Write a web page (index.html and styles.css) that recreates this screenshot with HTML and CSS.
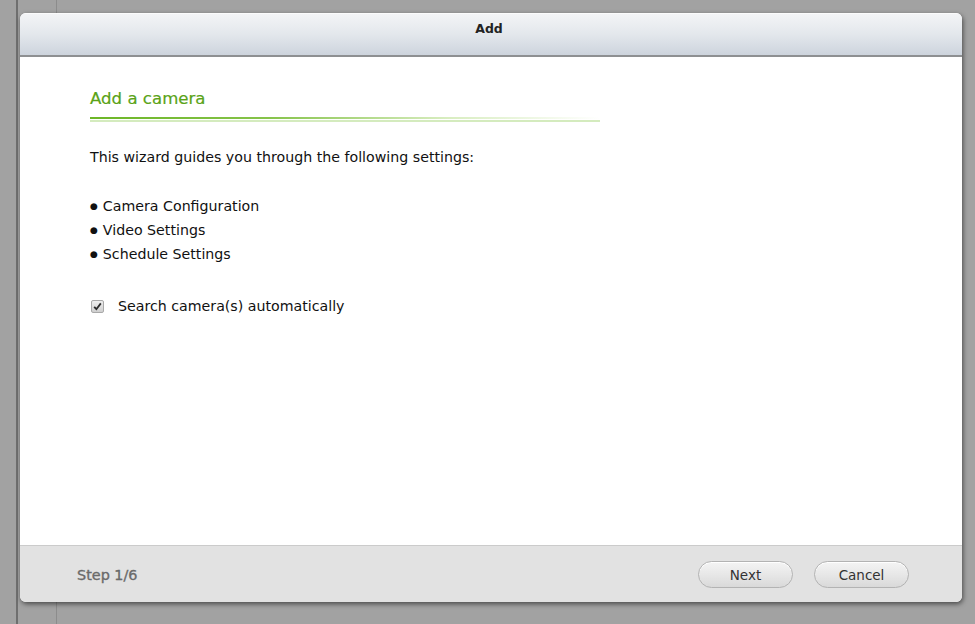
FILE: index.html
```html
<!DOCTYPE html>
<html>
<head>
<meta charset="utf-8">
<link rel="stylesheet" href="styles.css">
</head>
<body>
<div class="dialog">
  <div class="dlg-header">Add</div>
  <div class="dlg-body">
    <h1 class="title">Add a camera</h1>
    <div class="title-rule"></div>
    <p class="intro">This wizard guides you through the following settings:</p>
    <ul class="steps">
      <li>Camera Configuration</li>
      <li>Video Settings</li>
      <li>Schedule Settings</li>
    </ul>
    <label class="check-row">
      <span class="checkbox">
        <svg width="9" height="9" viewBox="0 0 9 9"><path d="M1.2 4.8 L3.4 7.2 L7.8 1.4" fill="none" stroke="#2a2a2a" stroke-width="1.8"/></svg>
      </span>
      <span>Search camera(s) automatically</span>
    </label>
  </div>
  <div class="dlg-footer">
    <span class="step">Step 1/6</span>
    <div class="buttons">
      <button class="btn">Next</button>
      <button class="btn">Cancel</button>
    </div>
  </div>
</div>
</body>
</html>
```
FILE: styles.css
```css
html, body {
  margin: 0;
  padding: 0;
  height: 100%;
}
body {
  background-color: #a2a2a2;
  background-image:
    linear-gradient(to right, transparent 16px, #6f6f6f 16px, #6f6f6f 18px, transparent 18px, transparent 56px, #8c8c8c 56px, #8c8c8c 57px, transparent 57px);
  font-family: "DejaVu Sans", Verdana, sans-serif;
  overflow: hidden;
  padding-top: 13px;
  box-sizing: border-box;
}
.dialog {
  margin-left: 20px;
  width: 942px;
  height: 589px;
  background: #fff;
  border-radius: 6px;
  box-shadow: 1px 2px 5px rgba(0,0,0,0.55);
  display: flex;
  flex-direction: column;
  overflow: hidden;
}
.dlg-header {
  height: 44px;
  flex: none;
  box-sizing: border-box;
  padding-top: 7px;
  background: linear-gradient(to bottom, #f3f4f6 0%, #e3e7ec 50%, #cdd4dd 100%);
  border-top: 1px solid #fbfbfb;
  border-bottom: 2px solid #8e9092;
  text-align: center;
  font-size: 12.5px;
  line-height: 16px;
  font-weight: bold;
  color: #222;
  padding-right: 4px;
}
.dlg-body {
  flex: 1;
  padding: 31px 0 0 70px;
  color: #111;
  font-size: 14.2px;
}
.title {
  margin: 0;
  font-size: 16.6px;
  font-weight: normal;
  color: #5aa317;
  line-height: 22px;
  -webkit-text-stroke: 0.2px #5aa317;
}
.title-rule {
  width: 510px;
  height: 2px;
  margin-top: 7px;
  background: linear-gradient(to right, #6cb626 0%, #86c34a 35%, rgba(190,225,150,0.6) 70%, rgba(255,255,255,0) 100%);
  border-bottom: 1px solid #fff;
  box-shadow: 0 2px 0 0 rgba(160,210,110,0.45);
}
.intro {
  margin: 27px 0 0 0;
  line-height: 20px;
}
.steps {
  list-style: none;
  margin: 27px 0 0 0;
  padding: 0;
}
.steps li {
  height: 24px;
  line-height: 24px;
}
.steps li::before {
  content: "\25CF";
  font-size: 9px;
  margin-right: 5px;
  position: relative;
  top: -2px;
}
.check-row {
  display: flex;
  align-items: center;
  margin-top: 30px;
  line-height: 20px;
}
.checkbox {
  width: 11px;
  height: 11px;
  border: 1px solid #a9a9a9;
  border-radius: 2px;
  background: linear-gradient(#eeeeee, #cfcfcf);
  display: inline-flex;
  align-items: center;
  justify-content: center;
  margin: 0 14px 0 1px;
}
.dlg-footer {
  flex: none;
  height: 57px;
  background: #e2e2e2;
  border-top: 1px solid #cbcbcb;
  display: flex;
  align-items: center;
  justify-content: space-between;
  padding: 1px 53px 0 57px;
  box-sizing: border-box;
}
.step {
  font-size: 14.4px;
  color: #6a6a6a;
  font-weight: 500;
  -webkit-text-stroke: 0.35px #6a6a6a;
}
.buttons {
  display: flex;
  gap: 21px;
}
.btn {
  width: 95px;
  height: 27px;
  border-radius: 14px;
  border: 1px solid #b3b3b3;
  background: linear-gradient(to bottom, #f4f4f4 0%, #e6e6e6 55%, #d9d9d9 100%);
  box-shadow: inset 0 1px 0 #fff;
  font-family: "DejaVu Sans", Verdana, sans-serif;
  font-size: 13.5px;
  color: #333;
  padding: 0;
}
```
